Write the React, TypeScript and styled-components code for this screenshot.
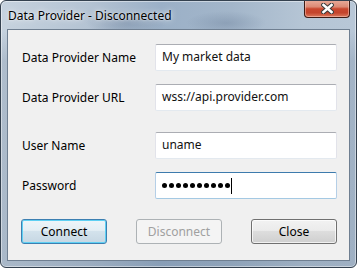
import React from "react";
import styled, { createGlobalStyle, css } from "styled-components";

const GlobalStyle = createGlobalStyle`
	html, body {
		margin: 0;
		padding: 0;
		background: #ffffff;
	}
	body {
		font-family: "Noto Sans", "Liberation Sans", sans-serif;
		font-size: 12px;
	}
`;

const Window = styled.div`
	box-sizing: border-box;
	width: 357px;
	height: 268px;
	display: flex;
	flex-direction: column;
	padding: 0 6px 6px 6px;
	border: 1px solid #34414f;
	border-radius: 6px;
	box-shadow: inset 0 0 0 1px rgba(255, 255, 255, 0.45);
	background:
		radial-gradient(ellipse 40px 14px at 125px 22px, rgba(120, 140, 165, 0.55), transparent),
		radial-gradient(ellipse 40px 12px at 225px 22px, rgba(120, 140, 165, 0.5), transparent),
		linear-gradient(180deg, rgba(255, 255, 255, 0) 0px, rgba(255, 255, 255, 0) 30px, rgba(70, 95, 125, 0.18) 60px, rgba(70, 95, 125, 0.22) 100%),
		linear-gradient(90deg, #c6d2de 0%, #b4c3d3 25%, #9bb0c7 45%, #a3b6ca 65%, #b5c5d5 85%, #b8c7d7 100%);
	overflow: hidden;
`;

const TitleBar = styled.div`
	height: 28px;
	display: flex;
	justify-content: space-between;
	align-items: flex-start;
`;

const Title = styled.div`
	padding: 6px 0 0 1px;
	font-size: 12px;
	color: #000;
	text-shadow: 0 0 6px rgba(255, 255, 255, 0.9), 0 0 2px rgba(255, 255, 255, 0.7);
`;

const CloseX = styled.div`
	box-sizing: border-box;
	width: 46px;
	height: 18px;
	margin-top: -1px;
	display: flex;
	align-items: center;
	justify-content: center;
	border: 1px solid #3e1b14;
	border-top: none;
	border-radius: 0 0 4px 4px;
	background: linear-gradient(
		180deg,
		#e9ad9c 0%,
		#dc8a75 40%,
		#c9472e 52%,
		#c4442c 75%,
		#dc7a5e 100%
	);
	box-shadow: inset 0 0 0 1px rgba(255, 220, 210, 0.45);
`;

const Client = styled.div`
	flex: 1;
	box-sizing: border-box;
	border: 1px solid #6f7f91;
	background: #f0f0f0;
	padding: 14px 12px 0 14px;
`;

const Row = styled.div<{ $spaced?: boolean }>`
	display: grid;
	grid-template-columns: 133px 182px;
	align-items: center;
	height: 27px;
	margin-top: ${(p) => (p.$spaced ? "21px" : "13px")};
	&:first-child {
		margin-top: 0;
	}
`;

const Label = styled.div`
	color: #000;
	font-size: 12px;
`;

const FieldBox = styled.div<{ $focused?: boolean }>`
	box-sizing: border-box;
	height: 27px;
	display: flex;
	align-items: center;
	padding: 0 0 2px 6px;
	background: #fff;
	border: 1px solid;
	border-radius: 2px;
	color: #111;
	font-size: 12px;
	${(p) =>
		p.$focused
			? css`
					border-color: #3d7bad #b5cfe7 #a4c9e3 #b5cfe7;
			  `
			: css`
					border-color: #abadb3 #e2e3ea #e3e9ef #e2e3ea;
			  `}
`;

const Dot = styled.span`
	width: 5px;
	height: 5px;
	border-radius: 50%;
	background: #000;
	margin-right: 2px;
	margin-top: 2px;
`;

const Caret = styled.span`
	width: 1px;
	height: 16px;
	background: #000;
	margin-left: -1px;
	margin-top: 2px;
`;

const ButtonRow = styled.div`
	display: flex;
	justify-content: space-between;
	width: 316px;
	margin: 20px 0 0 -1px;
`;

const Button = styled.div<{ $variant?: "default" | "disabled" }>`
	box-sizing: border-box;
	width: 86px;
	height: 25px;
	display: flex;
	align-items: center;
	justify-content: center;
	padding-bottom: 1px;
	border-radius: 3px;
	font-size: 12px;
	border: 1px solid #707070;
	color: #000;
	background: linear-gradient(180deg, #f2f2f2 0%, #ebebeb 45%, #dddddd 50%, #cfcfcf 100%);
	box-shadow: inset 0 0 0 1px rgba(255, 255, 255, 0.7);
	${(p) =>
		p.$variant === "default" &&
		css`
			border-color: #3c7fb1;
			background: linear-gradient(180deg, #eef5f9 0%, #e4eef4 45%, #d3e2ec 50%, #c6d7e3 100%);
			box-shadow: inset 0 0 0 1px #5fd0f3;
		`}
	${(p) =>
		p.$variant === "disabled" &&
		css`
			border-color: #adb2b5;
			color: #a0a0a0;
			background: #f4f4f4;
			box-shadow: none;
		`}
`;

function CloseGlyph() {
	return (
		<svg width="13" height="11" viewBox="0 0 13 11">
			<path d="M2.5 2 L10.5 9 M10.5 2 L2.5 9" stroke="#3b3b3b" strokeWidth="4.6" strokeLinecap="square" />
			<path d="M2.5 2 L10.5 9 M10.5 2 L2.5 9" stroke="#ffffff" strokeWidth="2.6" strokeLinecap="square" />
		</svg>
	);
}

const fields = [
	{ label: "Data Provider Name", value: "My market data" },
	{ label: "Data Provider URL", value: "wss://api.provider.com" },
	{ label: "User Name", value: "uname", spaced: true },
];

export default function App() {
	return (
		<>
			<GlobalStyle />
			<Window>
				<TitleBar>
					<Title>Data Provider - Disconnected</Title>
					<CloseX>
						<CloseGlyph />
					</CloseX>
				</TitleBar>
				<Client>
					{fields.map((f) => (
						<Row key={f.label} $spaced={f.spaced}>
							<Label>{f.label}</Label>
							<FieldBox>{f.value}</FieldBox>
						</Row>
					))}
					<Row>
						<Label>Password</Label>
						<FieldBox $focused>
							{Array.from({ length: 10 }).map((_, i) => (
								<Dot key={i} />
							))}
							<Caret />
						</FieldBox>
					</Row>
					<ButtonRow>
						<Button $variant='default'>Connect</Button>
						<Button $variant='disabled'>Disconnect</Button>
						<Button>Close</Button>
					</ButtonRow>
				</Client>
			</Window>
		</>
	);
}
